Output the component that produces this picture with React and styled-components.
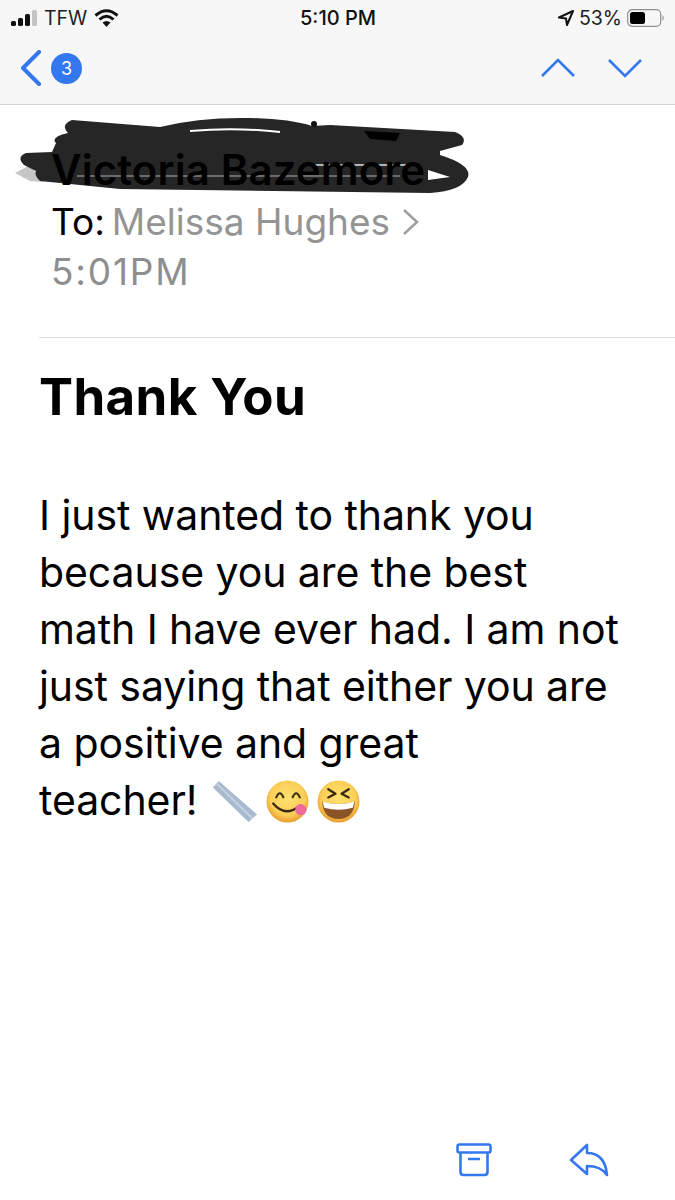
import React from 'react'
import styled, { createGlobalStyle } from 'styled-components'

const Global = createGlobalStyle`
html, body {
  margin: 0;
  padding: 0;
  background: #fff;
}
body {
  font-family: Inter, "Liberation Sans", sans-serif;
  color: #000;
}
`
const Screen = styled.div`
width: 675px;
height: 1200px;
display: flex;
flex-direction: column;
overflow: hidden;
background: #fff;
`
const TopBar = styled.div`
height: 104px;
flex-shrink: 0;
background: #f7f7f7;
border-bottom: 1px solid #d4d4d4;
display: flex;
flex-direction: column;
`
const StatusBar = styled.div`
height: 36px;
padding: 0 10px 0 11px;
display: grid;
grid-template-columns: 1fr auto 1fr;
align-items: center;
`
const StatusLeft = styled.div`
display: flex;
align-items: center;
gap: 7px;
color: #222;
font-size: 19.5px;
`
const StatusTime = styled.div`
font-weight: 500;
font-size: 20px;
color: #111;
`
const StatusRight = styled.div`
display: flex;
align-items: center;
justify-content: flex-end;
gap: 5px;
color: #222;
font-size: 19.5px;
`
const NavBar = styled.div`
flex: 1;
display: flex;
align-items: center;
justify-content: space-between;
padding: 0 33px 4px 20px;
`
const NavGroup = styled.div`
display: flex;
align-items: center;
gap: ${p => p.$gap}px;
`
const Badge = styled.div`
width: 31px;
height: 31px;
border-radius: 50%;
background: #3478f0;
color: #fff;
font-size: 18px;
display: flex;
align-items: center;
justify-content: center;
`
const Header = styled.div`
position: relative;
height: 232px;
flex-shrink: 0;
padding: 41px 0 0 51px;
box-sizing: border-box;
`
const Scribble = styled.svg`
position: absolute;
left: 0;
top: 0;
`
const Name = styled.div`
position: relative;
font-size: 42px;
line-height: 48px;
font-weight: 600;
letter-spacing: 0.1px;
white-space: nowrap;
`
const Recipient = styled.div`
display: flex;
align-items: center;
margin-top: 3px;
font-size: 37px;
line-height: 50px;
white-space: nowrap;
`
const Gray = styled.span`
color: #949494;
margin-left: 7px;
`
const Time = styled.div`
color: #8e8e8e;
font-size: 37px;
line-height: 50px;
letter-spacing: 1.8px;
`
const Message = styled.div`
margin-left: 39px;
border-top: 1px solid #dcdcdc;
padding-top: 29px;
`
const Subject = styled.h1`
margin: 0;
font-size: 51px;
line-height: 60px;
font-weight: 700;
letter-spacing: 0.4px;
`
const Body = styled.p`
margin: 60px 0 0;
font-size: 41px;
line-height: 57px;
letter-spacing: -0.08px;
white-space: pre-line;
`
const Emojis = styled.span`
display: inline-flex;
align-items: center;
gap: 8px;
margin-left: 14px;
vertical-align: -9px;
`
const Spacer = styled.div`
flex: 1;
`
const BottomBar = styled.div`
display: flex;
justify-content: flex-end;
align-items: center;
gap: 77px;
padding: 0 66px 23px 0;
`

const blue = '#3478f0'

const Ruler = () => (
  <svg width="46" height="46" viewBox="0 0 48 46">
    <path d="M7 2 L1 9 L38 45 L47 37 Z" fill="#a9b9cf" />
    <path d="M5 5 L42 41" stroke="#c6d2e1" strokeWidth="2" />
  </svg>
)

const FaceGradient = () => (
  <svg width="0" height="0" style={{ position: 'absolute' }}>
    <defs>
      <radialGradient id="face" cx="50%" cy="42%" r="58%">
        <stop offset="0%" stopColor="#fee06f" />
        <stop offset="70%" stopColor="#fbcf58" />
        <stop offset="100%" stopColor="#e79a2c" />
      </radialGradient>
    </defs>
  </svg>
)

const Yum = () => (
  <svg width="43" height="43" viewBox="0 0 42 42">
    <circle cx="21" cy="21" r="20.5" fill="url(#face)" />
    <path d="M10 17 Q13.5 9 17 17 M26 17 Q29.5 9 33 17" fill="none" stroke="#3a2a12" strokeWidth="2" strokeLinecap="round" />
    <path d="M7 23 Q19 37 33 25" fill="none" stroke="#3a2a12" strokeWidth="2.2" strokeLinecap="round" />
    <circle cx="34" cy="29" r="5.5" fill="#ee6a9c" />
  </svg>
)

const Laugh = () => (
  <svg width="43" height="43" viewBox="0 0 42 42">
    <circle cx="21" cy="21" r="20.5" fill="url(#face)" />
    <path d="M11 9 L18 13.5 L11 17 M31 9 L24 13.5 L31 17" fill="none" stroke="#3a2a12" strokeWidth="2.2" strokeLinecap="round" strokeLinejoin="round" />
    <path d="M5 21 Q21 26 37 21 Q36 38 21 38 Q6 38 5 21 Z" fill="#8a5426" />
    <path d="M5.5 21 Q21 26 36.5 21 L35 27 Q21 31 7 27 Z" fill="#fff" />
  </svg>
)

class App extends React.Component {
  render() {
    return (
      <Screen>
        <Global />
        <FaceGradient />
        <TopBar>
          <StatusBar>
            <StatusLeft>
              <svg width="26" height="16" viewBox="0 0 26 16">
                <rect x="0" y="11" width="5" height="5" rx="1.5" fill="#111" />
                <rect x="7" y="8" width="5" height="8" rx="1.5" fill="#111" />
                <rect x="14" y="4" width="5" height="12" rx="1.5" fill="#111" />
                <rect x="21" y="0" width="5" height="16" rx="1.5" fill="#c4c4c4" />
              </svg>
              TFW
              <svg width="25" height="18" viewBox="0 0 25 18">
                <path d="M12.5 18 L8.5 13.5 Q12.5 10.5 16.5 13.5 Z" fill="#111" />
                <path d="M1.5 6.5 Q12.5 -3 23.5 6.5 M5.5 10.5 Q12.5 4 19.5 10.5" fill="none" stroke="#111" strokeWidth="3" />
              </svg>
            </StatusLeft>
            <StatusTime>5:10 PM</StatusTime>
            <StatusRight>
              <svg width="16" height="16" viewBox="0 0 16 16">
                <path d="M15 1 L1 7.5 L8 8.5 L9 15 Z" fill="none" stroke="#111" strokeWidth="2" strokeLinejoin="round" />
              </svg>
              53%
              <svg width="38" height="18" viewBox="0 0 38 18">
                <rect x="0.7" y="0.7" width="33" height="16.6" rx="4.5" fill="none" stroke="#8f8f8f" strokeWidth="1.2" />
                <rect x="3" y="3" width="15" height="12" rx="2.5" fill="#000" />
                <path d="M35.5 6 Q38 9 35.5 12 Z" fill="#8f8f8f" />
              </svg>
            </StatusRight>
          </StatusBar>
          <NavBar>
            <NavGroup $gap={9}>
              <svg width="22" height="36" viewBox="0 0 22 36">
                <path d="M19 2 L3 18 L19 34" fill="none" stroke={blue} strokeWidth="4" strokeLinecap="round" strokeLinejoin="round" />
              </svg>
              <Badge>3</Badge>
            </NavGroup>
            <NavGroup $gap={33}>
              <svg width="34" height="20" viewBox="0 0 34 20">
                <path d="M1 18 L17 2 L33 18" fill="none" stroke={blue} strokeWidth="2.6" />
              </svg>
              <svg width="34" height="20" viewBox="0 0 34 20">
                <path d="M1 2 L17 18 L33 2" fill="none" stroke={blue} strokeWidth="2.6" />
              </svg>
            </NavGroup>
          </NavBar>
        </TopBar>
        <Header>
          <Scribble width="480" height="92" viewBox="0 0 480 92">
            <path d="M15 68 L30 60 L44 77 L30 76 Z" fill="#c6c6c6" />
            <path
              d="M72 15 L160 22 Q200 12 250 13 Q290 14 312 21 L330 20 L455 27 Q468 32 462 40 L440 46 L440 50 Q472 60 468 72 Q462 86 430 88 L120 84 L40 76 Q34 70 36 66 L24 60 Q16 52 26 48 L52 47 L56 38 Q50 32 68 28 Q60 20 72 15 Z"
              fill="#262626"
            />
            <path d="M190 26 Q235 22 280 27" stroke="#fff" strokeWidth="2" fill="none" />
            <path d="M428 65 L450 72 L428 75 Z" fill="#fff" />
            <path d="M313 60 L407 60" stroke="#e4e4e4" strokeWidth="1.5" fill="none" />
            <path d="M77 71 L400 71" stroke="#b0b0b0" strokeWidth="1.2" fill="none" />
            <circle cx="314" cy="19" r="3" fill="#111" />
            <path d="M364 26 L400 28 L396 36 L370 34 Z" fill="#000" />
          </Scribble>
          <Name>Victoria Bazemore</Name>
          <Recipient>
            To:<Gray>Melissa Hughes</Gray>
            <svg width="18" height="28" viewBox="0 0 18 28" style={{ marginLeft: 12 }}>
              <path d="M2 2 L15 14 L2 26" fill="none" stroke="#a0a0a0" strokeWidth="2.6" />
            </svg>
          </Recipient>
          <Time>5:01PM</Time>
        </Header>
        <Message>
          <Subject>Thank You</Subject>
          <Body>
            {'I just wanted to thank you\nbecause you are the best\nmath I have ever had. I am not\njust saying that either you are\na positive and great\nteacher!'}
            <Emojis>
              <Ruler />
              <Yum />
              <Laugh />
            </Emojis>
          </Body>
        </Message>
        <Spacer />
        <BottomBar>
          <svg width="36" height="34" viewBox="0 0 36 34">
            <rect x="1.5" y="1.5" width="33" height="8" rx="2" fill="none" stroke={blue} strokeWidth="2.6" />
            <path d="M4.5 10 V29 Q4.5 32 7.5 32 H28.5 Q31.5 32 31.5 29 V10 M12 16 H24" fill="none" stroke={blue} strokeWidth="2.6" />
          </svg>
          <svg width="40" height="34" viewBox="0 0 40 34">
            <path d="M2 17 L18 2 V10 Q36 10 38 32 Q32 23 18 23 V31 Z" fill="none" stroke={blue} strokeWidth="2.6" strokeLinejoin="round" />
          </svg>
        </BottomBar>
      </Screen>
    )
  }
}

export default App
